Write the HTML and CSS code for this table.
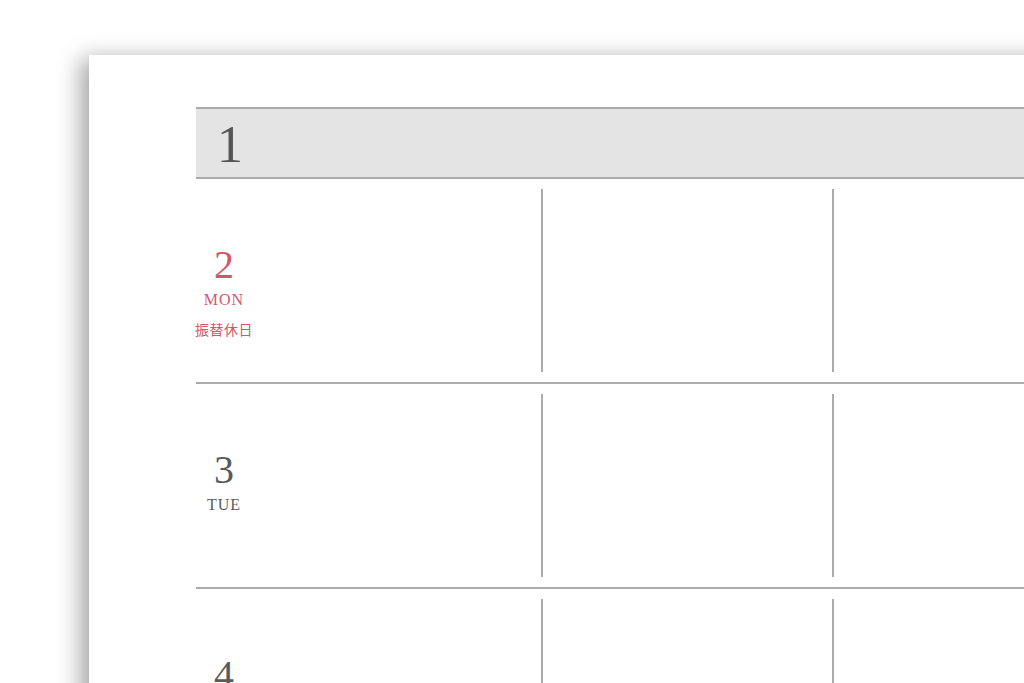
FILE: index.html
```html
<!DOCTYPE html>
<html lang="ja">
<head>
<meta charset="utf-8">
<title>Calendar</title>
<link rel="stylesheet" href="styles.css">
</head>
<body>
<div class="paper">
  <div class="month">1</div>
  <div class="row">
    <div class="day holiday">
      <div class="num">2</div>
      <div class="dow">MON</div>
      <div class="note">振替休日</div>
    </div>
    <div class="cell"></div>
    <div class="cell line"></div>
    <div class="cell line"></div>
  </div>
  <div class="row">
    <div class="day">
      <div class="num">3</div>
      <div class="dow">TUE</div>
    </div>
    <div class="cell"></div>
    <div class="cell line"></div>
    <div class="cell line"></div>
  </div>
  <div class="row">
    <div class="day">
      <div class="num">4</div>
      <div class="dow">WED</div>
    </div>
    <div class="cell"></div>
    <div class="cell line"></div>
    <div class="cell line"></div>
  </div>
</div>
</body>
</html>
```
FILE: styles.css
```css
html, body {
  margin: 0;
  padding: 0;
  background: #ffffff;
  overflow: hidden;
  width: 1024px;
  height: 683px;
}
.paper {
  margin: 55px 0 0 89px;
  width: 1100px;
  height: 800px;
  background: #ffffff;
  box-shadow: -8px 4px 22px rgba(0, 0, 0, 0.36);
  padding: 52px 0 0 107px;
  box-sizing: border-box;
  font-family: "Liberation Serif", "DejaVu Serif", serif;
  color: #555555;
}
.month {
  border-top: 2px solid #ababab;
  border-bottom: 2px solid #ababab;
  background: #e4e4e4;
  padding: 10px 0 0 21px;
  height: 58px;
  font-size: 52px;
  line-height: 1;
  color: #555555;
}
.row {
  display: grid;
  grid-template-columns: 56px 289px 291px 300px;
  height: 203px;
  border-bottom: 2px solid #ababab;
}
.day {
  text-align: center;
  padding-top: 66px;
  color: #5a5a5a;
}
.num {
  font-size: 40px;
  line-height: 1;
}
.dow {
  font-size: 16px;
  line-height: 1;
  margin-top: 7px;
  letter-spacing: 1px;
}
.note {
  font-family: "Noto Sans CJK JP", "Noto Sans", sans-serif;
  font-size: 14px;
  line-height: 1;
  margin-top: 14px;
  letter-spacing: 0.5px;
  white-space: nowrap;
  margin-left: -6px;
  margin-right: -6px;
}
.holiday {
  color: #d5566b;
}
.cell {
  margin: 10px 0;
}
.cell.line {
  border-left: 2px solid #ababab;
}
```
